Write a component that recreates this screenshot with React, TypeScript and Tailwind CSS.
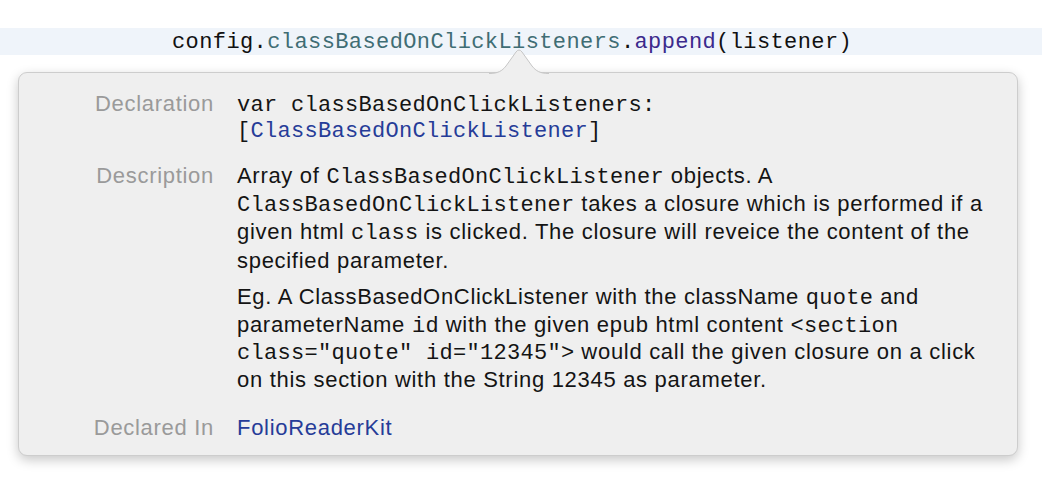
import React from "react";

const mono = "font-['Liberation_Mono',monospace]";
const sans = "font-['Liberation_Sans',Arial,sans-serif]";

function M({ children }: { children: React.ReactNode }) {
  return <span className={`${mono} text-[22px] leading-none tracking-[0.3px]`}>{children}</span>;
}

export default function App() {
  return (
    <div className="w-[1042px] h-[482px] bg-white overflow-hidden relative">
      <div className="h-[28px]" />
      <div className={`h-[27px] bg-[#eff4fa] flex items-center pl-[172px] pt-[2px] ${mono} text-[22px] tracking-[0.4px] text-[#111]`}>
        <span>config.</span>
        <span className="text-[#3f6d74]">classBasedOnClickListeners</span>
        <span>.</span>
        <span className="text-[#3b2a8c]">append</span>
        <span>(listener)</span>
      </div>
      <div className="h-[17px]" />
      <div className="relative ml-[18px] w-[1000px] rounded-[9px] border border-[#cdcdcd] bg-[#efefef] shadow-[0_4px_12px_rgba(0,0,0,0.22)] pt-[18px] pb-[13px]">
        <svg className="absolute left-[470px] top-[-25px]" width="60" height="27" viewBox="0 0 60 27">
          <path d="M0 25.5 C 9 25.5, 13 23, 17 18 L 27 4 Q 30 0 33 4 L 43 18 C 47 23, 51 25.5, 60 25.5 L 60 27 L 0 27 Z" fill="#efefef" />
          <path d="M0 25.5 C 9 25.5, 13 23, 17 18 L 27 4 Q 30 0 33 4 L 43 18 C 47 23, 51 25.5, 60 25.5" fill="none" stroke="#c6c6c6" strokeWidth="1" />
        </svg>
        <div className={`grid grid-cols-[195px_1fr] gap-x-[23px] ${sans} text-[22px] tracking-[0.7px] text-[#141414] pr-[17px]`}>
          <div className="text-right text-[#9a9a9a] leading-[26px]">Declaration</div>
          <div className="leading-[26px]">
            <div><M>var classBasedOnClickListeners:</M></div>
            <div>
              <M>
                [<span className="text-[#263c98]">ClassBasedOnClickListener</span>]
              </M>
            </div>
          </div>

          <div className="text-right text-[#9a9a9a] leading-[28px] mt-[19px]">Description</div>
          <div className="mt-[19px]">
            <p className="leading-[28.2px]">
              Array of <M>ClassBasedOnClickListener</M> objects. A <M>ClassBasedOnClickListener</M> takes a closure which is
              performed if a given html <M>class</M> is clicked. The closure will reveice the content of the specified parameter.
            </p>
            <p className="mt-[8px] leading-[27.7px]">
              Eg. A ClassBasedOnClickListener with the className <M>quote</M> and parameterName <M>id</M> with the given epub
              html content <M>&lt;section class="quote" id="12345"&gt;</M> would call the given closure on a click on this
              section with the String 12345 as parameter.
            </p>
          </div>

          <div className="text-right text-[#9a9a9a] leading-[28px] mt-[20px]">Declared In</div>
          <div className="leading-[28px] mt-[20px] text-[#263c98]">FolioReaderKit</div>
        </div>
      </div>
    </div>
  );
}
